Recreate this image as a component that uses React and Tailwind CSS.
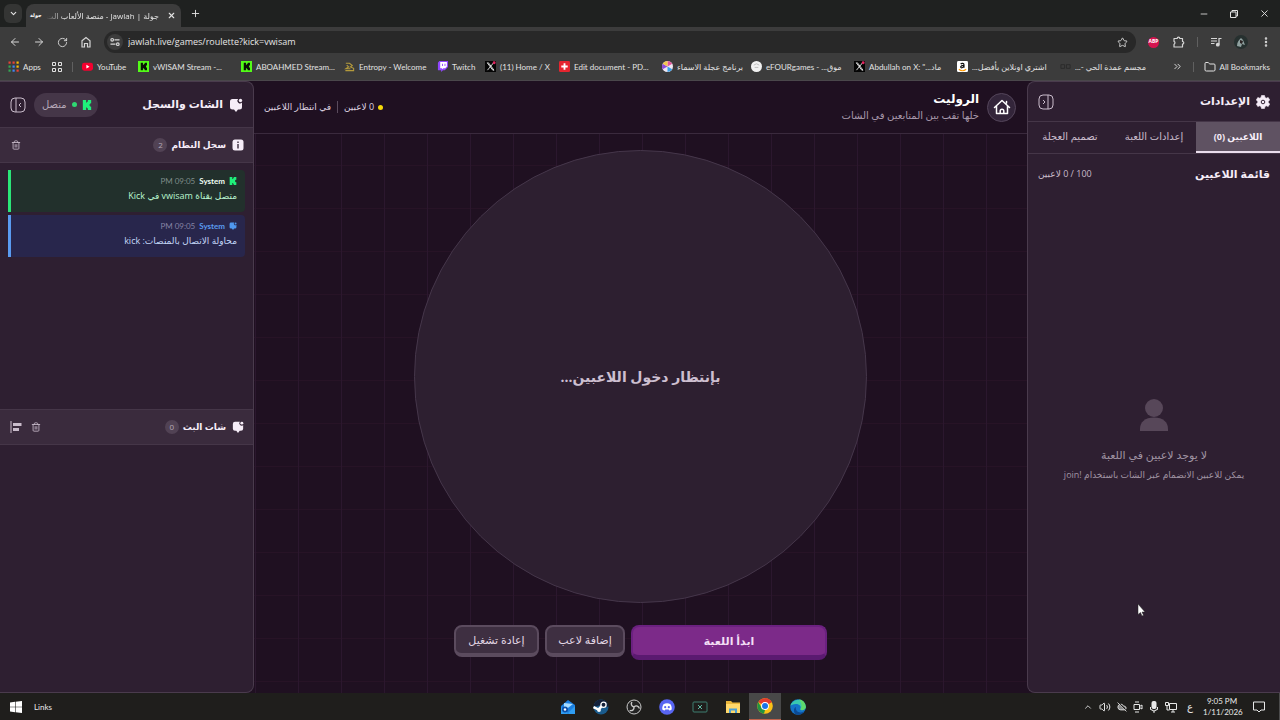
import React from "react";
import {
	ArrowLeft,
	ArrowRight,
	ChevronDown,
	ChevronUp,
	ChevronsRight,
	CloudOff,
	EllipsisVertical,
	Folder,
	Minus,
	Plus,
	RotateCw,
	Star,
	Trash2,
	Volume2,
	X,
} from "lucide-react";

/* ---------- icons ---------- */

const KickIcon = ({ className }) => (
	<svg viewBox="0 0 12 12" className={className} fill="currentColor">
		<path d="M1 0h4v3h1V2h1V0h4v4h-1v1H9v2h1v1h1v4H7v-2H6V9H5v3H1z" />
	</svg>
);

const KickTile = () => (
	<svg viewBox="0 0 12 12" className="size-full">
		<path d="M0 0h12v12H0z" fill="#53fc18" />
		<path d="M3 2h2.400v2h1V3h1V2h2.400v3h-1v2h1v3H7.400V9h-1V8h-1v2H3z" fill="#0b1206" />
	</svg>
);

const ChatIcon = ({ className }) => (
	<svg viewBox="0 0 14 14" className={className} fill="currentColor">
		<path d="M3.500 1h5.700a2.600 2.600 0 0 0 3.800 3.600V9a2.500 2.500 0 0 1-2.500 2.500H9L7 14l-2-2.500H3.500A2.500 2.500 0 0 1 1 9V3.500A2.500 2.500 0 0 1 3.500 1z" />
		<circle cx="11.500" cy="2.500" r="1.700" />
	</svg>
);

const InfoIcon = ({ className }) => (
	<svg viewBox="0 0 12 12" className={className}>
		<rect x="0.500" y="0.500" width="11" height="11" rx="2.500" fill="#f6edf8" />
		<path d="M5.300 2.600h1.400V4H5.300zM5.300 5h1.400v4.400H5.300z" fill="#3a2b3d" />
	</svg>
);

const GearIcon = ({ className }) => (
	<svg viewBox="0 0 14 14" className={className}>
		<path
			d="M5.500.5h3l.5 2 1.200.7 2-.7 1.500 2.600L12.200 6.500v1l1.500 1.400-1.500 2.600-2-.7-1.200.7-.5 2h-3l-.5-2-1.200-.7-2 .7L.3 8.900 1.800 7.500v-1L.3 5.100l1.500-2.600 2 .7L5 2.500z"
			fill="#f6edf8"
			stroke="#f6edf8"
			strokeWidth="0.600"
			strokeLinejoin="round"
		/>
		<circle cx="7" cy="7" r="1.800" fill="none" stroke="#2e1f31" strokeWidth="1" />
	</svg>
);

const PanelIcon = ({ side }) => (
	<svg viewBox="0 0 16 16" className="size-4" fill="none" stroke="currentColor">
		<rect x="1" y="1" width="14" height="14" rx="4" />
		{side === "left" ? (
			<path d="M6 1v14M11 6 9 8l2 2" />
		) : (
			<path d="M10 1v14M5 6l2 2-2 2" />
		)}
	</svg>
);

const HomeOutline = () => (
	<svg viewBox="0 0 18 18" className="size-[18px]" fill="none" stroke="#fff" strokeWidth="1.500" strokeLinecap="round" strokeLinejoin="round">
		<path d="M1.500 9.500 9 2.500l7.500 7M13.500 5V3.500M3.500 8v7.500h11V8M7.200 15.300V13a1.800 1.800 0 0 1 3.600 0v2.300" />
	</svg>
);

const UserIcon = () => (
	<svg viewBox="0 0 28 32" className="h-8 w-7" fill="#574759">
		<circle cx="14" cy="9" r="9" />
		<path d="M0 32v-2c0-7 5-11.500 14-11.500S28 23 28 30v2z" />
	</svg>
);

const AlignIcon = () => (
	<svg viewBox="0 0 12 12" className="size-3" fill="currentColor">
		<path d="M.5 0h1v12h-1zM3 2h8.500v3H3zM3 7h6v3H3z" />
	</svg>
);

const XTile = () => (
	<svg viewBox="0 0 12 12" className="size-full">
		<path d="M0 0h12v12H0z" fill="#050505" />
		<path d="m2.500 2 6 8h1.300l-6-8zM9.300 2 2.700 10" stroke="#e8e8e8" fill="none" />
		<circle cx="10" cy="2" r="1.600" fill="#e0245e" />
	</svg>
);

const favicons = {
	youtube: (
		<svg viewBox="0 0 12 12" className="size-full">
			<rect y="2" width="12" height="8.500" rx="2.500" fill="#f4002f" />
			<path d="m4.800 4.200 3.400 2-3.400 2z" fill="#fff" />
		</svg>
	),
	kick: <KickTile />,
	entropy: (
		<svg viewBox="0 0 12 12" className="size-full" fill="none" stroke="#b49a3c" strokeWidth="1.200">
			<path d="M2 2.500h4l3 2.500-2 1.500 3.500 1.500v2.500H1.500M3 4.500l2 2-3 2h5" />
		</svg>
	),
	twitch: (
		<svg viewBox="0 0 12 12" className="size-full">
			<path d="M2.500 0H12v6.500L8.500 10H6.500l-2 2v-2H1V2z" fill="#9146ff" />
			<path d="M3.500 1.200h7.300V6L9 7.800H7L5.500 9V7.800h-2z" fill="#fff" />
			<path d="M5.500 3h1v2.500h-1zM8.200 3h1v2.500h-1z" fill="#9146ff" />
		</svg>
	),
	x: <XTile />,
	pdf: (
		<svg viewBox="0 0 12 12" className="size-full">
			<rect width="12" height="12" rx="1.500" fill="#e5252f" />
			<path d="M6 2.500v7M2.500 6h7" stroke="#fff" strokeWidth="2" />
		</svg>
	),
	wheel: (
		<svg viewBox="0 0 12 12" className="size-full">
			<circle cx="6" cy="6" r="6" fill="#eee6f2" />
			<path d="M6 6V0a6 6 0 0 1 5.200 3z" fill="#e2579b" />
			<path d="m6 6 5.200 3A6 6 0 0 1 6 12z" fill="#3aa0e8" />
			<path d="M6 6 .8 9A6 6 0 0 1 .8 3z" fill="#8d4fd8" />
			<path d="M6 6 .8 3A6 6 0 0 1 6 0z" fill="#f2c94c" />
		</svg>
	),
	efour: (
		<svg viewBox="0 0 12 12" className="size-full">
			<circle cx="6" cy="6" r="6" fill="#f1f1f1" />
			<path d="M3 4.500 6 3l3 1.500M4 7h4" stroke="#b9b9b9" fill="none" />
		</svg>
	),
	amazon: (
		<svg viewBox="0 0 12 12" className="size-full">
			<rect width="12" height="12" rx="1.500" fill="#fff" />
			<path d="M4 3.300c1-1 3.600-.9 3.600.7v3.300M7.500 4.800C3 4.700 3.500 8 5.500 7.400c1-.2 2-1 2-2" stroke="#111" strokeWidth="1.300" fill="none" />
			<path d="M2 9c2.500 2 5.500 2 8 0" stroke="#f90" strokeWidth="1.200" fill="none" />
		</svg>
	),
	dim: (
		<svg viewBox="0 0 12 12" className="size-full" fill="none" stroke="#2a2a2a">
			<path d="M1 4h4v4H1zM7 4h4v4H7z" />
		</svg>
	),
};

/* ---------- browser chrome ---------- */

const bookmarks = [
	{ icon: "youtube", label: "YouTube", width: "w-14" },
	{ icon: "kick", label: "vWISAM Stream -...", width: "w-[103px]" },
	{ icon: "kick", label: "ABOAHMED Stream...", width: "w-[103px]" },
	{ icon: "entropy", label: "Entropy - Welcome", width: "w-[93px]" },
	{ icon: "twitch", label: "Twitch", width: "w-12" },
	{ icon: "x", label: "(11) Home / X", width: "w-[74px]" },
	{ icon: "pdf", label: "Edit document - PD...", width: "w-[103px]" },
	{ icon: "wheel", label: "برنامج عجلة الاسماء", width: "w-[89px]" },
	{ icon: "efour", label: "eFOURgames - موق...\u200f", width: "w-[103px]" },
	{ icon: "x", label: "Abdullah on X: \"ماد...\u200f", width: "w-[103px]" },
	{ icon: "amazon", label: "\u200fاشتري اونلاين بأفضل...\u200f", width: "w-[103px]" },
	{ icon: "dim", label: "\u200fمجسم عمدة الحي -...\u200f", width: "w-[103px]" },
];

const appDots = [
	"#ea4335", "#ea4335", "#fbbc04",
	"#34a853", "#4285f4", "#fbbc04",
	"#34a853", "#4285f4", "#ea4335",
];

function TabStrip() {
	return (
		<div className="flex h-[27px] items-end bg-[#1f2120] pl-1 text-[#e3e3e3]">
			<button aria-label="Search tabs" className="mb-1 flex h-[19px] w-[18px] items-center justify-center rounded-md bg-[#343534]">
				<ChevronDown size={9} strokeWidth={3} />
			</button>
			<div className="ml-1 flex h-[23px] w-[155px] items-center rounded-t-lg bg-[#3c3c3c] px-1">
				<span className="w-4 shrink-0 text-[5px] font-bold leading-none text-white">جولة</span>
				<span dir="rtl" className="flex-1 whitespace-nowrap text-[8px] leading-4 [mask-image:linear-gradient(to_left,#000_85%,transparent)]">
					جولة | Jawlah - منصة الألعاب الت
				</span>
				<button aria-label="Close tab" className="ml-1.5 flex size-3 items-center justify-center">
					<X size={9} strokeWidth={3} />
				</button>
			</div>
			<button aria-label="New tab" className="mb-2 ml-2 flex size-3 items-center justify-center">
				<Plus size={11} strokeWidth={2} />
			</button>
			<div className="mb-2 ml-auto flex items-center gap-5 pr-2.5">
				<button aria-label="Minimize"><Minus size={10} /></button>
				<button aria-label="Restore">
					<svg viewBox="0 0 10 10" className="size-2.5" fill="none" stroke="currentColor">
						<path d="M1.500 3h5.500v5.500H1.500zM3 3V1.500h5.500V7H7" />
					</svg>
				</button>
				<button aria-label="Close"><X size={11} /></button>
			</div>
		</div>
	);
}

function AddressBar() {
	return (
		<div className="flex h-[30px] items-center bg-[#3c3c3c] text-[#d6d6d6]">
			<div className="flex items-center gap-3 pl-[9px]">
				<button aria-label="Back"><ArrowLeft size={12} /></button>
				<button aria-label="Forward"><ArrowRight size={12} /></button>
				<button aria-label="Reload"><RotateCw size={11} /></button>
				<button aria-label="Home">
					<svg viewBox="0 0 12 12" className="size-3" fill="none" stroke="currentColor" strokeWidth="1.200">
						<path d="M2 4.800 6 1.500l4 3.300V11H7.500V7.500h-3V11H2z" />
					</svg>
				</button>
			</div>
			<div className="ml-3 flex h-[22px] flex-1 items-center rounded-full bg-[#282828] pl-[3px] pr-2">
				<span className="flex size-4 items-center justify-center rounded-full bg-[#3c3c3c]">
					<svg viewBox="0 0 10 10" className="size-2.5" fill="none" stroke="currentColor" strokeWidth="1.200">
						<circle cx="2.200" cy="2.800" r="1.300" />
						<path d="M4.500 2.800H9.500M.5 7.200h5" />
						<circle cx="7.800" cy="7.200" r="1.300" />
					</svg>
				</span>
				<input
					aria-label="Address"
					defaultValue="jawlah.live/games/roulette?kick=vwisam"
					className="ml-[5px] min-w-0 flex-1 bg-transparent text-[9px] text-[#e6e6e6] outline-none"
				/>
				<button aria-label="Bookmark this page"><Star size={11} /></button>
			</div>
			<div className="flex items-center gap-3 pl-3 pr-2">
				<span className="mr-0.5 flex size-[11px] items-center justify-center rounded-full bg-[#d4144f] text-[5px] font-bold text-white">ABP</span>
				<button aria-label="Extensions">
					<svg viewBox="0 0 12 12" className="size-3" fill="none" stroke="currentColor" strokeWidth="1.200" strokeLinejoin="round">
						<path d="M1 2.500h3.200a1.300 1.300 0 0 1 2.600 0h2.700v3a1.300 1.300 0 0 1 0 2.600V11H1V8.200a1.500 1.500 0 0 0 0-2.800z" />
					</svg>
				</button>
				<span className="h-2.5 w-px bg-[#606060]" />
				<button aria-label="Media">
					<svg viewBox="0 0 12 12" className="size-3" fill="none" stroke="currentColor" strokeWidth="1.200">
						<path d="M1 2.500h6M1 5h6M1 7.500h3.500M9 8.500V2.500h2.500" />
						<circle cx="7.800" cy="8.700" r="1.300" fill="currentColor" />
					</svg>
				</button>
				<svg viewBox="0 0 14 14" className="size-3.5">
					<circle cx="7" cy="7" r="7" fill="#26302f" />
					<path d="M3 11c0-4 2-6 4-8l2 2 2 5-3-1-1 3z" fill="#8fa09f" />
					<path d="m6 5 3 1-1 3-2-1z" fill="#2c2525" />
				</svg>
				<button aria-label="Menu"><EllipsisVertical size={12} strokeWidth={3} /></button>
			</div>
		</div>
	);
}

function BookmarksBar() {
	return (
		<nav className="flex h-6 items-center border-b border-[#4a474b] bg-[#3c3c3c] pb-1 pl-2 font-[Lato,'DejaVu_Sans',sans-serif] text-[8px] text-[#e2e2e2]">
			<a href="#apps" className="flex w-11 shrink-0 items-center gap-1">
				<svg viewBox="0 0 11 11" className="size-[11px]">
					{appDots.map((color, i) => (
						<rect key={i} x={(i % 3) * 4 + 0.5} y={Math.floor(i / 3) * 4 + 0.5} width="2.200" height="2.200" fill={color} />
					))}
				</svg>
				Apps
			</a>
			<button aria-label="Tab groups" className="shrink-0">
				<svg viewBox="0 0 10 10" className="size-2.5" fill="none" stroke="currentColor">
					<path d="M.5.5h3v3h-3zM6.500.5h3v3h-3zM.5 6.500h3v3h-3zM6.500 6.500h3v3h-3z" />
				</svg>
			</button>
			<span className="ml-2.5 mr-[9px] h-2.5 w-px shrink-0 bg-[#606060]" />
			{bookmarks.map((b, i) => (
				<a key={i} href="#bookmark" className={`flex shrink-0 items-center gap-1 ${b.width}`}>
					<span className="size-[11px] shrink-0">{favicons[b.icon]}</span>
					<span className="whitespace-nowrap">{b.label}</span>
				</a>
			))}
			<button aria-label="More bookmarks" className="ml-auto"><ChevronsRight size={11} /></button>
			<span className="mx-2.5 h-2.5 w-px shrink-0 bg-[#606060]" />
			<a href="#all" className="flex shrink-0 items-center gap-1 whitespace-nowrap pr-2.5">
				<Folder size={12} />
				All Bookmarks
			</a>
		</nav>
	);
}

/* ---------- settings (right) ---------- */

const tabs = ["اللاعبين (0)", "إعدادات اللعبة", "تصميم العجلة"];

function SettingsPanel() {
	return (
		<aside className="flex w-[253px] shrink-0 flex-col rounded-l-lg border border-r-0 border-[#4a3b4d] bg-[#2e1f31]">
			<header className="flex h-10 items-center justify-between border-b border-[#453648] px-2.5">
				<h2 className="flex items-center gap-1.5 text-[11px] font-bold text-[#f6edf8]">
					<GearIcon className="size-3.5" />
					الإعدادات
				</h2>
				<button aria-label="إخفاء الإعدادات" className="text-[#c9bccb]"><PanelIcon side="right" /></button>
			</header>
			<div role="tablist" className="grid h-8 grid-cols-3 border-b border-[#453648]">
				{tabs.map((tab, i) => (
					<button
						key={tab}
						role="tab"
						aria-selected={i === 0}
						className={
							i === 0
								? "whitespace-nowrap border-b-2 border-[#eadcec] bg-[#5f5262] text-[9px] font-bold text-[#f6edf8]"
								: "whitespace-nowrap pb-0.5 text-[10px] text-[#c9bccb]"
						}
					>
						{tab}
					</button>
				))}
			</div>
			<div className="flex h-10 items-center justify-between px-2.5">
				<h3 className="text-[11px] font-bold text-[#f6edf8]">قائمة اللاعبين</h3>
				<span className="text-[9px] text-[#c9bccb]">100 / 0 لاعبين</span>
			</div>
			<div className="flex flex-1 flex-col items-center justify-center pb-1 text-[#a094a3]">
				<UserIcon />
				<p className="mt-4 text-[11px] leading-4">لا يوجد لاعبين في اللعبة</p>
				<p className="mt-1 text-[9px] leading-4">يمكن للاعبين الانضمام عبر الشات باستخدام !join</p>
			</div>
		</aside>
	);
}

/* ---------- game (center) ---------- */

function Game() {
	return (
		<main className="flex min-w-0 flex-1 flex-col">
			<header className="flex h-[53px] items-center justify-between border-b border-[#3a2a3d] pl-2.5 pr-[11px]">
				<div className="flex items-center gap-2">
					<a href="#home" aria-label="الرئيسية" className="flex size-[29px] items-center justify-center rounded-full border border-[#54455a] bg-[#33253a]">
						<HomeOutline />
					</a>
					<div>
						<h1 className="text-xs font-bold leading-4 text-white">الروليت</h1>
						<p className="text-[10px] leading-4 text-[#a899ab]">خلها تقب بين المتابعين في الشات</p>
					</div>
				</div>
				<div className="flex items-center gap-1.5 text-[9px] text-[#ded2e0]">
					<span className="flex items-center gap-1">
						<span className="size-[5px] rounded-full bg-[#f5d90a]" />
						0 لاعبين
					</span>
					<span className="h-3 w-px bg-[#5a4b5d]" />
					<span>في انتظار اللاعبين</span>
				</div>
			</header>
			<section className="flex flex-1 flex-col items-center bg-[linear-gradient(to_right,#2b172e_1px,transparent_1px),linear-gradient(#271326_1px,transparent_1px)] bg-[length:43px_43px] bg-[position:1px_31px] pb-8 pt-4">
				<div className="flex aspect-square w-full max-w-[453px] items-center justify-center rounded-full border border-[#45364a] bg-[#2d1f30]">
					<p className="text-sm font-bold text-[#cdbfd0]">بإنتظار دخول اللاعبين...</p>
				</div>
				<div className="mt-[22px] flex items-start gap-1.5 text-[11px]">
					<button className="h-[35px] w-[196px] rounded-lg border-2 border-b-[5px] border-[#6b2180] border-b-[#5a1a70] bg-[#7c2a89] font-bold text-[#f3def5]">
						ابدأ اللعبة
					</button>
					<button className="h-8 w-20 rounded-lg border-2 border-b-4 border-[#5b4b5e] bg-[#3e2f41] text-[#e2d6e4]">
						إضافة لاعب
					</button>
					<button className="h-8 w-[85px] rounded-lg border-2 border-b-4 border-[#5b4b5e] bg-[#3e2f41] text-[#e2d6e4]">
						إعادة تشغيل
					</button>
				</div>
			</section>
		</main>
	);
}

/* ---------- chat and log (left) ---------- */

const SectionHeader = ({ icon, title, count, children }) => (
	<div className="flex h-9 shrink-0 items-center border-y border-[#453648] bg-[#3a2b3d] pl-2 pr-[9px]">
		{icon}
		<h3 className="mr-1.5 text-[9px] font-bold text-[#f6edf8]">{title}</h3>
		<span className="mr-1 flex size-3.5 items-center justify-center rounded-full bg-[#514254] text-[8px] text-[#b5a8b8]">{count}</span>
		<div className="mr-auto flex items-center gap-1 text-[#c9bccb]">{children}</div>
	</div>
);

const LogMeta = ({ children, nameClass, timeClass }) => (
	<div className="flex items-center gap-1 font-[Lato,sans-serif] text-[8px] leading-[14px]">
		{children}
		<span className={nameClass}>System</span>
		<span className={timeClass}>09:05 PM</span>
	</div>
);

function ChatPanel() {
	return (
		<aside className="flex w-[254px] shrink-0 flex-col rounded-r-lg border border-l-0 border-[#4a3b4d] bg-[#2e1f31]">
			<header className="flex h-[45px] items-center justify-between px-2.5">
				<h2 className="flex items-center gap-1.5 text-[11px] font-bold text-[#f6edf8]">
					<ChatIcon className="size-3.5" />
					الشات والسجل
				</h2>
				<div className="flex items-center gap-2">
					<span className="flex h-6 items-center gap-[5px] rounded-full bg-[#453648] pl-2 pr-1.5 text-[10px] text-[#b5a8b8]">
						<KickIcon className="size-2.5 text-[#1ff07a]" />
						<span className="size-[5px] rounded-full bg-[#2fd872]" />
						متصل
					</span>
					<button aria-label="إخفاء الشات" className="text-[#c9bccb]"><PanelIcon side="left" /></button>
				</div>
			</header>
			<SectionHeader icon={<InfoIcon className="size-3" />} title="سجل النظام" count={2}>
				<button aria-label="مسح السجل" className="flex size-4 items-center justify-center"><Trash2 size={10} /></button>
			</SectionHeader>
			<ul className="flex grow basis-0 flex-col gap-[3px] px-2 py-[7px] text-[9px]">
				<li className="h-[42px] rounded-r border-l-[3px] border-[#2be578] bg-[#22302c] px-2 pt-1">
					<LogMeta nameClass="font-bold text-[#f0fff5]" timeClass="text-[#7f8d8a]">
						<KickIcon className="size-2 text-[#1ff07a]" />
					</LogMeta>
					<p className="leading-4 text-[#b9f5cf]">متصل بقناة vwisam في Kick</p>
				</li>
				<li className="h-[42px] rounded-r border-l-[3px] border-[#5a9bf0] bg-[#28264c] px-2 pt-1">
					<LogMeta nameClass="font-bold text-[#5a9bf0]" timeClass="text-[#8583a3]">
						<ChatIcon className="size-2 text-[#4f97ee]" />
					</LogMeta>
					<p className="leading-4 text-[#c3d6f7]">محاولة الاتصال بالمنصات: kick</p>
				</li>
			</ul>
			<SectionHeader icon={<ChatIcon className="size-3 text-[#f6edf8]" />} title="شات البث" count={0}>
				<button aria-label="مسح الشات" className="flex size-4 items-center justify-center"><Trash2 size={10} /></button>
				<button aria-label="محاذاة" className="flex size-4 items-center justify-center"><AlignIcon /></button>
			</SectionHeader>
			<div className="grow basis-0 p-2" />
		</aside>
	);
}

/* ---------- taskbar ---------- */

const apps = [
	{
		name: "Mail",
		icon: (
			<svg viewBox="0 0 16 16" className="size-4">
				<path d="M1 7 8 1l7 5v9H1z" fill="#1b7fe0" />
				<path d="m4 4 9 1-9 7z" fill="#a8dcff" />
				<path d="m1 8 8 7H1zM15 7l-8 8h8z" fill="#2f9df2" />
				<circle cx="5" cy="10.500" r="3" fill="#0d4fa8" />
				<circle cx="5" cy="10.500" r="1.200" fill="#fff" />
			</svg>
		),
	},
	{
		name: "Steam",
		icon: (
			<svg viewBox="0 0 16 16" className="size-4">
				<circle cx="8" cy="8" r="7.500" fill="#1a5b8d" />
				<path d="M.5 8A7.500 7.500 0 0 1 15.500 8L8 6z" fill="#14213a" />
				<path d="m.5 8 5 2.500 4-4" stroke="#fff" strokeWidth="2.500" fill="none" />
				<circle cx="10.500" cy="5.800" r="2.600" fill="#14213a" stroke="#fff" strokeWidth="1.300" />
				<circle cx="6" cy="11" r="1.900" fill="#fff" />
			</svg>
		),
	},
	{
		name: "OBS Studio",
		icon: (
			<svg viewBox="0 0 16 16" className="size-4" fill="none" stroke="#c9c9c9">
				<circle cx="8" cy="8" r="7" fill="#232323" />
				<path d="M8 8C5.500 7.500 4.500 5 6 3M8 8c2-2 5-1 5.300 1.500M8 8c.3 2.800-2 4.300-4.300 3.300" strokeWidth="1.400" />
			</svg>
		),
	},
	{
		name: "Discord",
		icon: (
			<svg viewBox="0 0 16 16" className="size-4">
				<circle cx="8" cy="8" r="7.800" fill="#5865f2" />
				<path d="M4.500 5.200c2-1.200 5-1.200 7 0 1 1.700 1.400 3.400 1.200 5.200-.8.700-1.600 1-2.400 1.100l-.6-1H6.300l-.6 1c-.8-.1-1.600-.4-2.400-1.100-.2-1.800.2-3.500 1.200-5.200z" fill="#fff" />
				<circle cx="6.200" cy="8.200" r="1.100" fill="#5865f2" />
				<circle cx="9.800" cy="8.200" r="1.100" fill="#5865f2" />
			</svg>
		),
	},
	{
		name: "Display tool",
		icon: (
			<svg viewBox="0 0 16 16" className="size-4" fill="none" stroke="#3e7f70">
				<rect x="1" y="3" width="14" height="10" rx="1" />
				<path d="m6 6 4 4M10 6l-4 4" stroke="#5fb8a2" />
			</svg>
		),
	},
	{
		name: "File Explorer",
		icon: (
			<svg viewBox="0 0 16 16" className="size-4">
				<path d="M1 2h5l1.500 1.500H15V14H1z" fill="#e9b53a" />
				<path d="M1 5h14v9H1z" fill="#ffd86b" />
				<path d="M4 14V9.500h8V14h-2v-2.500H6V14z" fill="#4e9fd3" />
			</svg>
		),
	},
	{
		name: "Chrome",
		active: true,
		icon: (
			<svg viewBox="0 0 16 16" className="size-4">
				<circle cx="8" cy="8" r="7.800" fill="#fbc116" />
				<path d="M8 8 1.300 4.100A7.800 7.800 0 0 1 14.700 4.100z" fill="#e33b2e" />
				<path d="M8 4.100h6.700L8 8zM8 .2A7.800 7.800 0 0 1 14.700 4.100H8z" fill="#e33b2e" />
				<path d="M1.300 4.100 4.700 10 8 12l-1 3.700A7.800 7.800 0 0 1 1.300 4.100z" fill="#229342" />
				<circle cx="8" cy="8" r="3.900" fill="#fff" />
				<circle cx="8" cy="8" r="3" fill="#1a73e8" />
			</svg>
		),
	},
	{
		name: "Edge",
		icon: (
			<svg viewBox="0 0 16 16" className="size-4">
				<circle cx="8" cy="8" r="7.800" fill="#1473c8" />
				<path d="M.4 7A7.800 7.800 0 0 1 15.800 8c0 2-2 3.200-4 3.200-1.500 0-2-.7-1.400-1.400C11.500 7.500 9.500 5 6 5 3 5 1 6 .4 7z" fill="#39c8b0" />
				<path d="M9 .3A7.800 7.800 0 0 1 15.800 8c0 2-2 3.200-4 3.200L10.500 10c2-2 1-6-1.500-9.700z" fill="#5edb6d" />
				<path d="M6 8c-1 3 1.500 6 5 5.500 1.500-.2 2.500-.7 3.300-1.300A7.800 7.800 0 0 1 6 15.500C3 13 3.500 9 6 8z" fill="#0c4a94" />
			</svg>
		),
	},
];

function Taskbar() {
	return (
		<footer className="flex h-[27px] items-center bg-[#1f1e1c] text-[#e8e8e8]">
			<button aria-label="Start" className="ml-2.5">
				<svg viewBox="0 0 12 12" className="size-3" fill="#fff">
					<path d="m0 1.500 5-.7v4.900H0zM5.600.7 12 0v5.700H5.600zM0 6.300h5v4.900l-5-.7zM5.600 6.300H12V12l-6.400-.8z" />
				</svg>
			</button>
			<span className="ml-3 flex-10 font-[Lato,sans-serif] text-[8px]">Links</span>
			<div className="flex h-full shrink-0">
				{apps.map((app) => (
					<button
						key={app.name}
						aria-label={app.name}
						className={
							app.active
								? "flex w-8 items-center justify-center border-b border-[#c0614a] bg-[#484848]"
								: "flex w-[33px] items-center justify-center"
						}
					>
						{app.icon}
					</button>
				))}
			</div>
			<div className="flex h-full flex-9 items-center justify-end gap-1.5">
				<ChevronUp size={10} />
				<Volume2 size={12} />
				<CloudOff size={10} fill="#8a8a8a" />
				<svg viewBox="0 0 10 12" className="h-3 w-2.5" fill="none" stroke="currentColor">
					<path d="M2 1h4M2 11h4M1 3.500h5.500v5H1zM6.500 5.500 9 4v4L6.500 6.500" />
				</svg>
				<svg viewBox="0 0 10 12" className="h-3 w-2.5" fill="currentColor">
					<rect x="2.500" width="5" height="8" rx="2" />
					<path d="M1 6h1v2l3 1.500L8 8V6h1v2.500L5.500 10.500V12h-1v-1.500L1 8.500z" />
				</svg>
				<svg viewBox="0 0 12 12" className="size-3" fill="none" stroke="currentColor">
					<path d="M4.500 2.500h7v6h-7zM6 11h4M8 8.500V11M.5 1.500h3v3h-3zM2 4.500V9h2.500" />
				</svg>
				<span className="ml-1 text-[10px]">ع</span>
				<time className="ml-1 w-[38px] whitespace-nowrap text-center font-[Lato,sans-serif] text-[8px] leading-[11px]">
					9:05 PM
					<br />
					1/11/2026
				</time>
				<button aria-label="Notifications" className="ml-1.5 mr-2">
					<svg viewBox="0 0 12 12" className="size-3" fill="none" stroke="currentColor">
						<path d="M.5 1h11v8H8l-2 2-2-2H.5z" />
					</svg>
				</button>
				<span className="h-full w-px bg-[#4b4b4b]" />
			</div>
		</footer>
	);
}

export default function App() {
	return (
		<div className="relative flex min-h-screen flex-col bg-[#1f1021] font-['Open_Sans','DejaVu_Sans',sans-serif]">
			<TabStrip />
			<AddressBar />
			<BookmarksBar />
			<div dir="rtl" className="flex flex-1">
				<SettingsPanel />
				<Game />
				<ChatPanel />
			</div>
			<Taskbar />
			{/* Mouse pointer */}
			<svg viewBox="0 0 10 14" className="pointer-events-none absolute right-[134px] bottom-[103px] h-3.5 w-2.5" fill="#fff" stroke="#222" strokeWidth="0.500">
				<path d="M2 1v10.500l2.500-2L6 13l1.500-.7L6 9h3z" />
			</svg>
		</div>
	);
}
